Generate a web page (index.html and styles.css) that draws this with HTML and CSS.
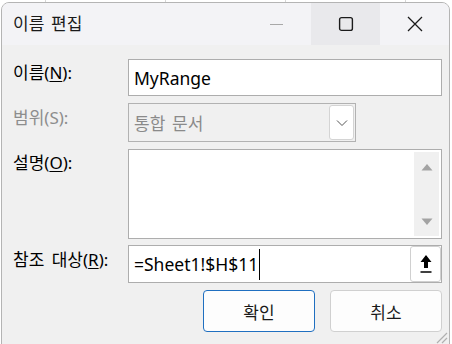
FILE: index.html
```html
<!DOCTYPE html>
<html lang="ko">
<head>
<meta charset="utf-8">
<title>이름 편집</title>
<link rel="stylesheet" href="styles.css">
</head>
<body>
<div class="window">
  <div class="titlebar">
    <div class="title">이름 편집</div>
    <div class="caption">
      <div class="cbtn">
        <svg width="15" height="15" viewBox="0 0 15 15"><path d="M1 7.5H14" stroke="#a8a8a8" stroke-width="1.2"/></svg>
      </div>
      <div class="cbtn hover">
        <svg width="16" height="16" viewBox="0 0 16 16"><rect x="1.6" y="1.6" width="12.8" height="12.8" rx="2" fill="none" stroke="#1b1b1b" stroke-width="1.4"/></svg>
      </div>
      <div class="cbtn">
        <svg width="16" height="16" viewBox="0 0 16 16"><path d="M1 1L15 15M15 1L1 15" stroke="#1b1b1b" stroke-width="1.3"/></svg>
      </div>
    </div>
  </div>
  <div class="content">
    <div class="form">
      <div class="lbl">이름(<u>N</u>):</div>
      <div class="field input"><span class="val">MyRange</span></div>

      <div class="lbl disabled">범위(S):</div>
      <div class="combo">
        <span class="val">통합 문서</span>
        <div class="dd">
          <svg width="12" height="8" viewBox="0 0 12 8"><path d="M1 1.5L6 6.5L11 1.5" fill="none" stroke="#555" stroke-width="1"/></svg>
        </div>
      </div>

      <div class="lbl">설명(<u>O</u>):</div>
      <div class="field textarea">
        <div class="scroll">
          <svg width="12" height="8" viewBox="0 0 12 8"><path d="M0.5 7.5L6 1L11.5 7.5Z" fill="#a3a3a3"/></svg>
          <svg width="12" height="8" viewBox="0 0 12 8"><path d="M0.5 0.5L6 7L11.5 0.5Z" fill="#a3a3a3"/></svg>
        </div>
      </div>

      <div class="lbl">참조 대상(<u>R</u>):</div>
      <div class="field input ref">
        <span class="val">=Sheet1!$H$11</span><span class="caret"></span>
        <div class="refbtn">
          <svg width="14" height="20" viewBox="0 0 14 20"><path d="M7 1L12.5 8H9V14H5V8H1.5Z" fill="#000"/><path d="M1.5 18H12.5" stroke="#000" stroke-width="1.4"/></svg>
        </div>
      </div>
    </div>
    <div class="buttons">
      <button class="btn primary">확인</button>
      <button class="btn">취소</button>
    </div>
  </div>
  <div class="grip">
    <svg width="14" height="14" viewBox="0 0 14 14"><path d="M13 3L3 13M13 8L8 13" stroke="#b0b0b0" stroke-width="1.2"/></svg>
  </div>
</div>
</body>
</html>
```

FILE: styles.css
```css
html, body {
  margin: 0;
  padding: 0;
}
body {
  width: 452px;
  height: 344px;
  overflow: hidden;
  background-color: #ffffff;
  background-image: repeating-linear-gradient(90deg, transparent 0 45px, #d6d6d6 45px 46px, transparent 46px 120px);
  font-family: "Noto Sans", "Noto Sans CJK KR", sans-serif;
  color: #000;
}
.window {
  position: relative;
  box-sizing: border-box;
  margin: 2px 0 0 1px;
  width: 449px;
  height: 350px;
  border: 1px solid #b4b4b4;
  border-radius: 8px 8px 0 0;
  background: #f0f0f0;
  overflow: hidden;
}
.titlebar {
  height: 42px;
  display: flex;
  align-items: center;
  background: #f3f3f6;
}
.title {
  flex: 1;
  padding-left: 11px;
  font-family: "Noto Sans CJK KR", sans-serif;
  font-size: 17px;
  word-spacing: 2px;
  color: #1a1a1a;
  padding-bottom: 3px;
}
.caption {
  display: flex;
  height: 100%;
}
.cbtn {
  width: 69px;
  height: 100%;
  display: flex;
  align-items: center;
  justify-content: center;
}
.cbtn svg { display: block; }
.cbtn.hover { background: #e9e9ec; }
.content {
  padding: 14px 7px 0 11px;
  display: flex;
  flex-direction: column;
  gap: 7px;
}
.form {
  display: grid;
  grid-template-columns: 115px 1fr;
  grid-template-rows: 37px 39px 90px 37px;
  row-gap: 7px;
}
.form .input.ref { margin-top: -1px; }
.lbl {
  font-size: 17px;
  line-height: 20px;
  padding-top: 4px;
  word-spacing: 3px;
  white-space: nowrap;
}
.lbl u { text-underline-offset: 2px; }
.lbl.disabled { color: #8d8d8d; padding-top: 5px; }
.field {
  box-sizing: border-box;
  border: 1px solid #adadad;
  background: #ffffff;
  position: relative;
}
.input {
  display: flex;
  align-items: center;
  padding-left: 5px;
}
.val {
  font-size: 17.5px;
  white-space: nowrap;
}
.combo {
  box-sizing: border-box;
  width: 228px;
  border: 1px solid #b2b2b2;
  background: #f0f0f0;
  display: flex;
  align-items: center;
  justify-content: space-between;
  padding: 1px 1px 1px 5px;
}
.combo .val {
  color: #8a8a8a;
  font-family: "Noto Sans CJK KR", sans-serif;
  font-size: 17px;
  word-spacing: 2px;
}
.dd {
  box-sizing: border-box;
  width: 25px;
  height: 100%;
  background: #ffffff;
  border: 1px solid #d4d4d4;
  border-radius: 3px;
  display: flex;
  align-items: center;
  justify-content: center;
}
.textarea {
  display: flex;
  justify-content: flex-end;
  padding: 2px 2px 2px 0;
}
.scroll {
  width: 25px;
  background: #f0f0f0;
  display: flex;
  flex-direction: column;
  align-items: center;
  justify-content: space-between;
  padding: 11px 0 10px;
}
.scroll svg { display: block; }
.caret {
  width: 1px;
  height: 31px;
  background: #000;
  margin-left: 1px;
}
.refbtn {
  position: absolute;
  right: 0;
  top: 0;
  bottom: 0;
  width: 31px;
  box-sizing: border-box;
  border: 1px solid #d0d0d0;
  border-radius: 3px;
  background: #ffffff;
  display: flex;
  align-items: center;
  justify-content: center;
}
.buttons {
  display: flex;
  justify-content: flex-end;
  gap: 15px;
}
.btn {
  box-sizing: border-box;
  width: 112px;
  height: 42px;
  border: 1px solid #d0d0d0;
  border-radius: 4px;
  background: #fdfdfd;
  font-family: "Noto Sans CJK KR", sans-serif;
  font-size: 17px;
  color: #1a1a1a;
  padding: 0;
}
.btn.primary {
  border: 1.5px solid #1f6fc0;
}
.grip {
  position: absolute;
  right: 1px;
  top: 327px;
}
.grip svg { display: block; }
```
